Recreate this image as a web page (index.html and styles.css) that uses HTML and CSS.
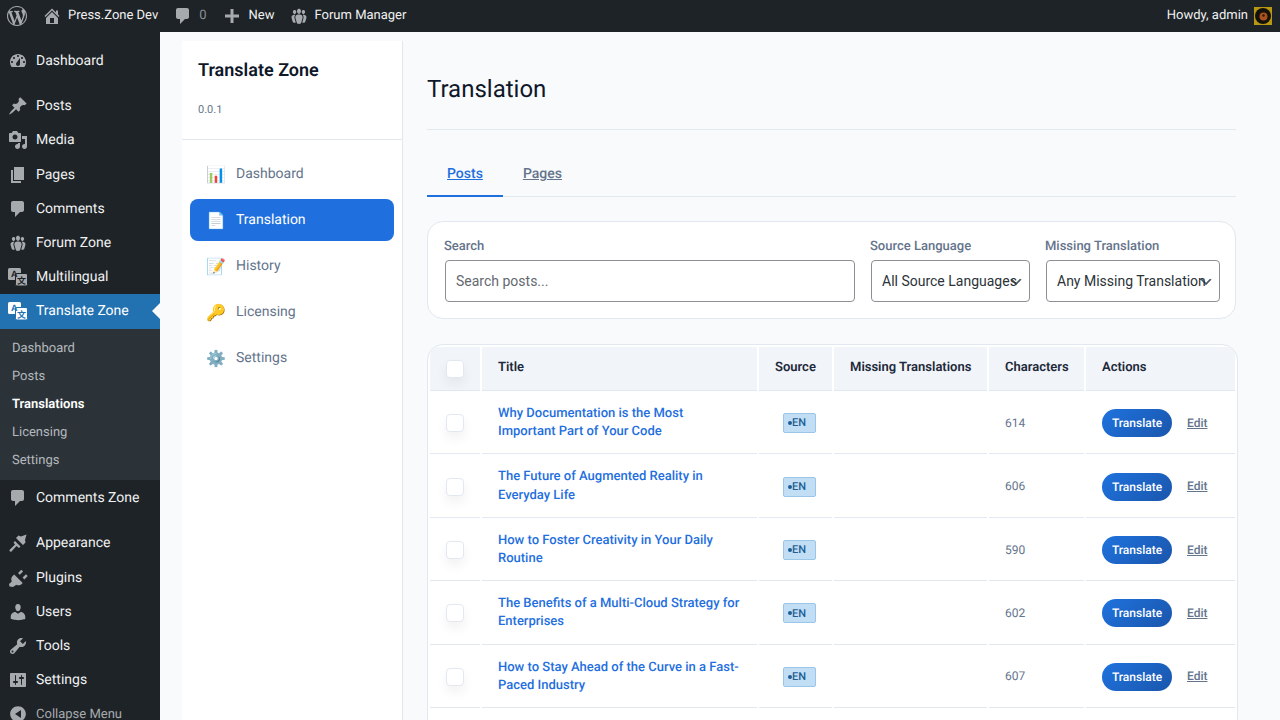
FILE: index.html
```html
<!DOCTYPE html>
<html>
<head>
    <title>Translate Zone</title>
    <meta name="viewport" content="width=device-width, initial-scale=1.0">
    <link rel="stylesheet" href="styles.css">
</head>
<body>
    <!-- Icon set -->
    <svg class="icon-defs" xmlns="http://www.w3.org/2000/svg">
        <symbol id="i-wp" viewBox="0 0 20 20"><path d="M20 10c0-5.510-4.490-10-10-10C4.480 0 0 4.490 0 10c0 5.520 4.480 10 10 10 5.510 0 10-4.480 10-10zM7.780 15.370L4.370 6.220c.550-.020 1.170-.080 1.170-.080.500-.060.440-1.130-.060-1.110 0 0-1.450.110-2.370.110-.180 0-.370 0-.580-.010C4.120 2.690 6.870 1.110 10 1.110c2.330 0 4.450.870 6.050 2.340-.680-.110-1.650.390-1.650 1.580 0 .740.450 1.360.900 2.100.350.610.550 1.360.550 2.460 0 1.490-1.400 5-1.400 5l-3.030-8.350c.540-.020.820-.170.820-.170.500-.050.440-1.250-.060-1.220 0 0-1.440.120-2.380.120-.870 0-2.330-.120-2.330-.120-.500-.030-.560 1.200-.060 1.220l.920.080 1.260 3.410-1.770 5.300zM17.410 10c.240-.640.740-1.870.430-4.250.700 1.290 1.050 2.710 1.050 4.250 0 3.290-1.730 6.240-4.400 7.780.970-2.590 1.940-5.200 2.920-7.780zM6.100 18.090C3.120 16.650 1.110 13.530 1.110 10c0-1.300.230-2.480.720-3.590C3.250 10.300 4.670 14.200 6.100 18.090zm4.030-6.630l2.580 6.980c-.840.300-1.700.440-2.710.440-.860 0-1.700-.130-2.480-.360l2.610-7.060z"/></symbol>
        <symbol id="i-home" viewBox="0 0 20 20"><path d="M16 8.500l1.530 1.530-1.060 1.060L10 4.620l-6.470 6.470-1.060-1.060L10 2.500l4 4v-2h2v4zm-6-2.460l6 5.990V18H4v-5.970zM12 17v-5H8v5h4z"/></symbol>
        <symbol id="i-comment" viewBox="0 0 20 20"><path d="M5 2h9c1.100 0 2 .9 2 2v7c0 1.100-.9 2-2 2h-2l-5 5v-5H5c-1.100 0-2-.9-2-2V4c0-1.100.9-2 2-2z"/></symbol>
        <symbol id="i-plus" viewBox="0 0 20 20"><path d="M17 8.500v3h-5.500V17h-3v-5.500H3v-3h5.500V3h3v5.500z"/></symbol>
        <symbol id="i-groups" viewBox="0 0 20 20"><path d="M8.030 4.460c-.29 1.280.55 3.460 1.970 3.460 1.410 0 2.250-2.180 1.960-3.460-.22-.98-1.080-1.630-1.960-1.630-.89 0-1.740.65-1.970 1.630zm-4.130.9c-.25 1.080.47 2.930 1.670 2.930s1.920-1.850 1.670-2.930c-.19-.83-.92-1.390-1.670-1.390s-1.480.56-1.670 1.390zm8.860 0c-.25 1.080.47 2.930 1.660 2.930 1.200 0 1.920-1.850 1.670-2.930-.19-.83-.92-1.390-1.670-1.390-.74 0-1.470.56-1.660 1.390zm-.59 11.430l1.250-4.300C14.200 10 12.710 8.470 10 8.470c-2.720 0-4.210 1.530-3.420 4.020l1.250 4.300C8.050 17.510 9 18 10 18c.98 0 1.940-.49 2.170-1.210zm-6.100-7.630c-.49.670-.96 1.830-.42 3.590l1.120 3.790c-.34.200-.77.310-1.200.310-.85 0-1.660-.410-1.840-1.030l-1.070-3.650c-.65-2.110.61-3.400 2.920-3.400.27 0 .54.020.79.060-.1.100-.2.220-.3.330zm8.350-.39c2.310 0 3.580 1.290 2.920 3.400l-1.070 3.650c-.18.620-.99 1.030-1.840 1.030-.43 0-.86-.110-1.200-.310l1.110-3.770c.55-1.780.08-2.940-.42-3.610-.08-.110-.18-.230-.28-.330.25-.040.51-.060.78-.060z"/></symbol>
        <symbol id="i-dashboard" viewBox="0 0 20 20"><path fill-rule="evenodd" d="M3.760 16h12.480c1.100-1.370 1.760-3.110 1.760-5 0-4.420-3.580-8-8-8s-8 3.580-8 8c0 1.890.66 3.630 1.760 5zM10 4c.55 0 1 .45 1 1s-.45 1-1 1-1-.45-1-1 .45-1 1-1zM6 6c.55 0 1 .45 1 1s-.45 1-1 1-1-.45-1-1 .45-1 1-1zm8 0c.55 0 1 .45 1 1s-.45 1-1 1-1-.45-1-1 .45-1 1-1zm-5.370 5.550L12 7v6c0 1.100-.9 2-2 2s-2-.9-2-2c0-.57.24-1.080.63-1.450zM4 10c.55 0 1 .45 1 1s-.45 1-1 1-1-.45-1-1 .45-1 1-1zm12 0c.55 0 1 .45 1 1s-.45 1-1 1-1-.45-1-1 .45-1 1-1z"/></symbol>
        <symbol id="i-pin" viewBox="0 0 20 20"><path d="M10.440 3.020l1.820-1.820 6.360 6.350-1.830 1.820c-1.050-.68-2.480-.57-3.410.36l-.75.75c-.92.93-1.040 2.350-.35 3.410l-1.830 1.820-2.410-2.410-2.800 2.790c-.42.42-3.380 2.710-3.800 2.290s1.860-3.390 2.280-3.810l2.790-2.790L4.100 9.360l1.830-1.820c1.050.69 2.480.57 3.400-.36l.75-.75c.93-.92 1.050-2.350.36-3.410z"/></symbol>
        <symbol id="i-media" viewBox="0 0 20 20"><path fill-rule="evenodd" d="M13 11V4c0-.55-.45-1-1-1h-1.670L9 1H5L3.670 3H2c-.55 0-1 .45-1 1v7c0 .55.45 1 1 1h10c.55 0 1-.45 1-1zM7 4.500c1.380 0 2.500 1.120 2.500 2.500S8.380 9.500 7 9.500 4.500 8.380 4.500 7 5.620 4.500 7 4.500zM14 6h5v10.500c0 1.380-1.120 2.500-2.500 2.500S14 17.880 14 16.500s1.120-2.500 2.500-2.500c.17 0 .34.02.5.05V9h-3V6zm-4 8.050V13h2v3.500c0 1.380-1.120 2.500-2.500 2.500S7 17.880 7 16.500 8.120 14 9.500 14c.17 0 .34.02.5.05z"/></symbol>
        <symbol id="i-pages" viewBox="0 0 20 20"><path d="M6 15V2h10v13H6zm-1 1h8v2H3V5h2v11z"/></symbol>
        <symbol id="i-translate" viewBox="0 0 20 20">
            <rect x="0" y="1" width="13" height="12" rx="1.500"/>
            <rect class="cut-box" x="7.500" y="6.500" width="12" height="12.500" rx="1.500"/>
            <text class="cut-a" x="3" y="10">A</text>
            <text class="cut-b" x="9" y="16.500">文</text>
        </symbol>
        <symbol id="i-brush" viewBox="0 0 20 20"><path d="M8 5l2.500-2.500 2.500 1 5.500-2-1.500 5.500.5 2.500-2.500 2.500z"/><path d="M7 8l5.500 5.500-1.500 1.500-2.500-2L3.500 18.500c-1 1-2.800-.6-1.800-1.700L7 11.500 5.500 9.500z"/></symbol>
        <symbol id="i-plug" viewBox="0 0 20 20"><path d="M13.300 1.800l1.800 1.700-3.300 3.300-1.800-1.800zM18 6.300l1.700 1.800-3.300 3.300-1.800-1.800zM6.200 6.500l8.500 8.500-.9.900c-1.500 1.500-3.700 1.700-5.400.8L5 19l-3.500-.5L1 16l2.800-2.600c-.9-1.800-.7-3.900.8-5.400z"/></symbol>
        <symbol id="i-users" viewBox="0 0 20 20"><path d="M10 9.250c-2.270 0-2.730-3.440-2.730-3.440C7 4.020 7.820 2 9.970 2c2.160 0 2.980 2.020 2.710 3.810 0 0-.41 3.440-2.680 3.440zm0 2.570L12.720 10c2.390 0 4.520 2.330 4.520 4.530v2.490s-3.650 1.130-7.240 1.130c-3.650 0-7.240-1.130-7.240-1.130v-2.490c0-2.250 1.940-4.480 4.560-4.480z"/></symbol>
        <symbol id="i-tools" viewBox="0 0 20 20"><path fill-rule="evenodd" d="M16.680 9.770c-1.340 1.340-3.300 1.670-4.950.99l-5.410 6.520c-.99.99-2.590.99-3.580 0s-.99-2.590 0-3.570l6.520-5.420c-.68-1.650-.35-3.610.99-4.950 1.280-1.280 3.120-1.620 4.720-1.060l-2.890 2.890 2.820 2.820 2.860-2.870c.53 1.580.18 3.390-1.080 4.650zM3.810 16.210c.4.390 1.030.39 1.420 0 .4-.4.4-1.030 0-1.430-.39-.39-1.020-.39-1.420 0-.39.4-.39 1.030 0 1.430z"/></symbol>
        <symbol id="i-settings" viewBox="0 0 20 20"><path fill-rule="evenodd" d="M18 16V4c0-.55-.45-1-1-1H3c-.55 0-1 .45-1 1v12c0 .55.45 1 1 1h14c.55 0 1-.45 1-1zM8 11h1c.55 0 1 .45 1 1s-.45 1-1 1H8v1.500c0 .28-.22.5-.5.5s-.5-.22-.5-.5V13H6c-.55 0-1-.45-1-1s.45-1 1-1h1V5.500c0-.28.22-.5.5-.5s.5.22.5.5V11zm5-2h-1c-.55 0-1-.45-1-1s.45-1 1-1h1V5.500c0-.28.22-.5.5-.5s.5.22.5.5V7h1c.55 0 1 .45 1 1s-.45 1-1 1h-1v5.500c0 .28-.22.5-.5.5s-.5-.22-.5-.5V9z"/></symbol>
        <symbol id="i-collapse" viewBox="0 0 20 20"><path fill-rule="evenodd" d="M10 2.160c4.330 0 7.840 3.510 7.840 7.840s-3.510 7.840-7.840 7.840S2.160 14.330 2.160 10 5.670 2.160 10 2.160zM13 14V6l-6 4z"/></symbol>
    </svg>

    <!-- Admin Bar -->
    <header class="admin-bar">
        <a class="bar-item bar-logo"><svg class="bar-logo-icon"><use href="#i-wp"/></svg></a>
        <a class="bar-item bar-home"><svg class="bar-icon"><use href="#i-home"/></svg>Press.Zone Dev</a>
        <a class="bar-item bar-comments"><svg class="bar-icon"><use href="#i-comment"/></svg><span class="bar-count">0</span></a>
        <a class="bar-item bar-new"><svg class="bar-icon"><use href="#i-plus"/></svg>New</a>
        <a class="bar-item bar-forum"><svg class="bar-icon"><use href="#i-groups"/></svg>Forum Manager</a>
        <a class="bar-item bar-user">Howdy, admin
            <svg class="avatar" viewBox="0 0 18 18"><rect width="18" height="18" fill="#b8980f"/><circle cx="9" cy="9" r="8" fill="#14110c"/><circle cx="9.500" cy="9.500" r="4" fill="#a8501e"/><circle cx="9.500" cy="8.500" r="1.200" fill="#2a1a10"/></svg>
        </a>
    </header>

    <div class="layout">
        <!-- WordPress Menu -->
        <aside class="admin-menu">
            <a class="menu-item"><svg class="menu-icon"><use href="#i-dashboard"/></svg>Dashboard</a>
            <div class="menu-sep"></div>
            <a class="menu-item"><svg class="menu-icon"><use href="#i-pin"/></svg>Posts</a>
            <a class="menu-item"><svg class="menu-icon"><use href="#i-media"/></svg>Media</a>
            <a class="menu-item"><svg class="menu-icon"><use href="#i-pages"/></svg>Pages</a>
            <a class="menu-item"><svg class="menu-icon"><use href="#i-comment"/></svg>Comments</a>
            <a class="menu-item"><svg class="menu-icon"><use href="#i-groups"/></svg>Forum Zone</a>
            <a class="menu-item"><svg class="menu-icon"><use href="#i-translate"/></svg>Multilingual</a>
            <a class="menu-item current"><svg class="menu-icon"><use href="#i-translate"/></svg>Translate Zone</a>
            <ul class="submenu">
                <li><a>Dashboard</a></li>
                <li><a>Posts</a></li>
                <li><a class="current">Translations</a></li>
                <li><a>Licensing</a></li>
                <li><a>Settings</a></li>
            </ul>
            <a class="menu-item"><svg class="menu-icon"><use href="#i-comment"/></svg>Comments Zone</a>
            <div class="menu-sep menu-sep-low"></div>
            <a class="menu-item"><svg class="menu-icon"><use href="#i-brush"/></svg>Appearance</a>
            <a class="menu-item"><svg class="menu-icon"><use href="#i-plug"/></svg>Plugins</a>
            <a class="menu-item"><svg class="menu-icon"><use href="#i-users"/></svg>Users</a>
            <a class="menu-item"><svg class="menu-icon"><use href="#i-tools"/></svg>Tools</a>
            <a class="menu-item"><svg class="menu-icon"><use href="#i-settings"/></svg>Settings</a>
            <a class="menu-item collapse"><svg class="menu-icon"><use href="#i-collapse"/></svg>Collapse Menu</a>
        </aside>

        <div class="content">
            <!-- Plugin Sidebar -->
            <aside class="plugin-side">
                <div class="plugin-head">
                    <h2>Translate Zone</h2>
                    <p>0.0.1</p>
                </div>
                <nav class="plugin-nav">
                    <a><span class="nav-emoji">📊</span>Dashboard</a>
                    <a class="active"><span class="nav-emoji">📄</span>Translation</a>
                    <a><span class="nav-emoji">📝</span>History</a>
                    <a><span class="nav-emoji">🔑</span>Licensing</a>
                    <a><span class="nav-emoji">⚙️</span>Settings</a>
                </nav>
            </aside>

            <!-- Main Content -->
            <main class="main">
                <h1>Translation</h1>

                <div class="tabs">
                    <a class="tab active">Posts</a>
                    <a class="tab">Pages</a>
                </div>

                <div class="filters">
                    <div class="field field-search">
                        <label for="search">Search</label>
                        <input type="text" id="search" placeholder="Search posts...">
                    </div>
                    <div class="field field-source">
                        <label for="source">Source Language</label>
                        <select id="source"><option>All Source Languages</option></select>
                    </div>
                    <div class="field field-missing">
                        <label for="missing">Missing Translation</label>
                        <select id="missing"><option>Any Missing Translation</option></select>
                    </div>
                </div>

                <div class="table-wrap">
                    <table>
                        <colgroup>
                            <col class="c-check"><col class="c-title"><col class="c-source"><col class="c-missing"><col class="c-chars"><col class="c-actions">
                        </colgroup>
                        <thead>
                            <tr>
                                <th><span class="check"></span></th>
                                <th>Title</th>
                                <th>Source</th>
                                <th>Missing Translations</th>
                                <th>Characters</th>
                                <th>Actions</th>
                            </tr>
                        </thead>
                        <tbody>
                            <tr>
                                <td><span class="check"></span></td>
                                <td><a class="post-link">Why Documentation is the Most Important Part of Your Code</a></td>
                                <td><span class="badge">EN</span></td>
                                <td></td>
                                <td class="chars">614</td>
                                <td><a class="btn-translate">Translate</a><a class="edit-link">Edit</a></td>
                            </tr>
                            <tr>
                                <td><span class="check"></span></td>
                                <td><a class="post-link">The Future of Augmented Reality in Everyday Life</a></td>
                                <td><span class="badge">EN</span></td>
                                <td></td>
                                <td class="chars">606</td>
                                <td><a class="btn-translate">Translate</a><a class="edit-link">Edit</a></td>
                            </tr>
                            <tr>
                                <td><span class="check"></span></td>
                                <td><a class="post-link">How to Foster Creativity in Your Daily Routine</a></td>
                                <td><span class="badge">EN</span></td>
                                <td></td>
                                <td class="chars">590</td>
                                <td><a class="btn-translate">Translate</a><a class="edit-link">Edit</a></td>
                            </tr>
                            <tr>
                                <td><span class="check"></span></td>
                                <td><a class="post-link">The Benefits of a Multi-Cloud Strategy for Enterprises</a></td>
                                <td><span class="badge">EN</span></td>
                                <td></td>
                                <td class="chars">602</td>
                                <td><a class="btn-translate">Translate</a><a class="edit-link">Edit</a></td>
                            </tr>
                            <tr>
                                <td><span class="check"></span></td>
                                <td><a class="post-link">How to Stay Ahead of the Curve in a Fast-Paced Industry</a></td>
                                <td><span class="badge">EN</span></td>
                                <td></td>
                                <td class="chars">607</td>
                                <td><a class="btn-translate">Translate</a><a class="edit-link">Edit</a></td>
                            </tr>
                        </tbody>
                    </table>
                </div>
            </main>
        </div>
    </div>
</body>
</html>
```

FILE: styles.css
```css
* {
    box-sizing: border-box;
    margin: 0;
    padding: 0;
}

html, body {
    height: 720px;
    overflow: hidden;
}

body {
    font-family: Roboto, "Noto Sans", sans-serif;
    font-size: 13px;
    background-color: #f8fafc;
    color: #0f172a;
    display: flex;
    flex-direction: column;
    text-rendering: geometricPrecision;
}

.icon-defs {
    display: none;
}

/* Admin Bar */
.admin-bar {
    height: 32px;
    flex: none;
    background-color: #1d2327;
    color: #f0f0f1;
    display: flex;
    align-items: center;
    line-height: 32px;
}

.bar-item {
    display: flex;
    align-items: center;
}

.bar-icon {
    width: 20px;
    height: 20px;
    fill: #a7aaad;
    margin-right: 6px;
}

.bar-logo {
    margin-left: 7px;
}

.bar-logo-icon {
    width: 20px;
    height: 20px;
    fill: #a7aaad;
}

.bar-home {
    margin-left: 15px;
}

.bar-comments {
    margin-left: 15px;
}

.bar-count {
    color: #8c8f94;
}

.bar-new {
    margin-left: 15px;
}

.bar-new .bar-icon {
    margin-right: 7px;
}

.bar-forum {
    margin-left: 15px;
}

.bar-forum .bar-icon {
    margin-right: 5px;
}

.bar-user {
    margin-left: auto;
    margin-right: 8px;
}

.avatar {
    width: 18px;
    height: 18px;
    margin-left: 6px;
}

.layout {
    flex: 1;
    display: flex;
    min-height: 0;
}

/* WordPress Menu */
.admin-menu {
    width: 160px;
    flex: none;
    background-color: #1d2327;
    padding-top: 12px;
    overflow: hidden;
}

.menu-item {
    position: relative;
    display: flex;
    align-items: center;
    height: 34.2px;
    font-size: 14px;
    color: #f0f0f1;
}

.menu-icon {
    width: 20px;
    height: 20px;
    margin: 0 8px;
    fill: #a7aaad;
    --cut: #1d2327;
}

.cut-box {
    stroke: var(--cut);
    stroke-width: 1;
}

.cut-a, .cut-b {
    fill: var(--cut);
    font-family: "Liberation Sans", sans-serif;
    font-weight: 700;
    font-size: 9px;
}

.cut-b {
    font-family: "Noto Sans CJK SC", sans-serif;
    font-size: 9px;
}

.menu-sep {
    height: 11px;
}

.menu-sep-low {
    height: 11.6px;
}

.menu-item.current {
    background-color: #2271b1;
    color: #fff;
}

.menu-item.current .menu-icon {
    fill: #fff;
    --cut: #2271b1;
}

.menu-item.current::after {
    content: "";
    position: absolute;
    right: 0;
    top: 9px;
    border: 8px solid transparent;
    border-right-color: #f8fafc;
    border-left-width: 0;
}

.submenu {
    list-style: none;
    background-color: #2c3338;
    padding: 6px 0 5px;
    margin-bottom: 1px;
}

.submenu a {
    display: block;
    height: 28px;
    line-height: 28px;
    padding-left: 12px;
    font-size: 13px;
    color: #b4b9be;
}

.submenu a.current {
    color: #fff;
    font-weight: 600;
}

.menu-item.collapse {
    font-size: 13px;
    color: #a7aaad;
}

/* Content Area */
.content {
    flex: 1;
    display: flex;
    padding: 9px 0 0 22px;
    min-width: 0;
}

.plugin-side {
    width: 221px;
    flex: none;
    background-color: #fff;
    border-right: 1px solid #e2e8f0;
}

.plugin-head {
    height: 99px;
    padding: 18px 16px 0;
    border-bottom: 1px solid #e2e8f0;
}

.plugin-head h2 {
    font-size: 18px;
    line-height: 24px;
    font-weight: 600;
    color: #0f172a;
}

.plugin-head p {
    margin-top: 20px;
    font-size: 11px;
    line-height: 14px;
    color: #64748b;
}

.plugin-nav {
    display: flex;
    flex-direction: column;
    gap: 4px;
    padding: 13px 8px 0;
}

.plugin-nav a {
    display: flex;
    align-items: center;
    height: 42px;
    padding: 0 16px;
    border-radius: 8px;
    font-size: 14px;
    color: #64748b;
}

.plugin-nav a.active {
    background-color: #1f6fde;
    color: #fff;
}

.nav-emoji {
    width: 30px;
    flex: none;
    font-size: 16px;
}

/* Main Panel */
.main {
    flex: none;
    width: 833px;
    padding: 0 0 0 24px;
}

.main h1 {
    height: 89px;
    padding-top: 32px;
    font-size: 24px;
    line-height: 32px;
    font-weight: 400;
    color: #0f172a;
    border-bottom: 1px solid #e2e8f0;
}

.tabs {
    display: flex;
    margin-top: 24px;
    border-bottom: 1px solid #e2e8f0;
}

.tab {
    padding: 11px 20px;
    margin-bottom: -1px;
    font-size: 14px;
    line-height: 19px;
    font-weight: 500;
    color: #64748b;
    text-decoration: underline;
    border-bottom: 2px solid transparent;
}

.tab.active {
    color: #1f6fde;
    border-bottom-color: #1f6fde;
}

.filters {
    display: flex;
    gap: 14px;
    height: 98px;
    margin-top: 24px;
    padding: 16px 14px 0 16px;
    background-color: #fff;
    border: 1px solid #e2e8f0;
    border-radius: 16px;
}

.field-search {
    flex: 1;
    min-width: 0;
}

.field-source {
    width: 161px;
}

.field-missing {
    width: 176px;
}

.field label {
    display: block;
    margin-bottom: 5px;
    font-size: 13px;
    line-height: 17px;
    font-weight: 500;
    color: #64748b;
}

.field input, .field select {
    display: block;
    width: calc(100% - 2px);
    height: 42px;
    margin: 0 1px;
    padding: 0 10px;
    font-family: inherit;
    font-size: 14px;
    color: #2c3338;
    background-color: #fff;
    border: 1px solid #8c8f94;
    border-radius: 4px;
}

.field input::placeholder {
    color: #646970;
    opacity: 1;
}

.field select {
    appearance: none;
    padding-right: 0;
    background: #fff url("data:image/svg+xml,%3Csvg xmlns='http://www.w3.org/2000/svg' viewBox='0 0 20 20'%3E%3Cpath d='M5 6l5 5 5-5 2 1-7 7-7-7 2-1z' fill='%2350575e'/%3E%3C/svg%3E") no-repeat right 5px top 55%;
    background-size: 16px 16px;
}

/* Posts Table */
.table-wrap {
    width: 811px;
    height: 420px;
    margin-top: 25px;
    background-color: #fff;
    border: 1px solid #e2e8f0;
    border-radius: 16px;
    overflow: hidden;
}

table {
    width: 809px;
    table-layout: fixed;
    border-collapse: separate;
    border-spacing: 2px;
}

.c-check { width: 50px; }
.c-title { width: 275px; }
.c-source { width: 73px; }
.c-missing { width: 153px; }
.c-chars { width: 95px; }
.c-actions { width: 149px; }

th, td {
    padding: 12px 16px;
    font-size: 13px;
    line-height: 1.4;
    text-align: left;
    border-bottom: 1px solid #e2e8f0;
}

th {
    height: 44px;
    background-color: #f1f5f9;
    font-weight: 600;
    color: #1e293b;
    white-space: nowrap;
}

td {
    vertical-align: middle;
}

.check {
    display: block;
    width: 18px;
    height: 18px;
    background-color: #fff;
    border: 1px solid #e2e8f0;
    border-radius: 4px;
    box-shadow: 0 6px 12px rgba(15, 23, 42, 0.06);
}

.post-link {
    color: #1f6fde;
    font-weight: 500;
}

.badge {
    display: flex;
    align-items: center;
    width: 33px;
    height: 20px;
    margin-left: 8px;
    padding-left: 4px;
    font-size: 11px;
    font-weight: 500;
    color: #1e5f96;
    background-color: #c2def5;
    border: 1px solid #9ac6ea;
    border-radius: 2px;
}

.badge::before {
    content: "";
    width: 4px;
    height: 4px;
    border-radius: 50%;
    background-color: #1e5f96;
}

.chars {
    font-size: 12px;
    color: #64748b;
}

.btn-translate {
    display: inline-block;
    width: 70px;
    height: 28px;
    line-height: 28px;
    text-align: center;
    font-size: 12px;
    font-weight: 500;
    color: #fff;
    background: linear-gradient(135deg, #1f72de, #1a56ac);
    border-radius: 14px;
    vertical-align: middle;
}

.edit-link {
    margin-left: 15px;
    font-size: 12px;
    font-weight: 500;
    color: #64748b;
    text-decoration: underline;
    vertical-align: middle;
}
```
